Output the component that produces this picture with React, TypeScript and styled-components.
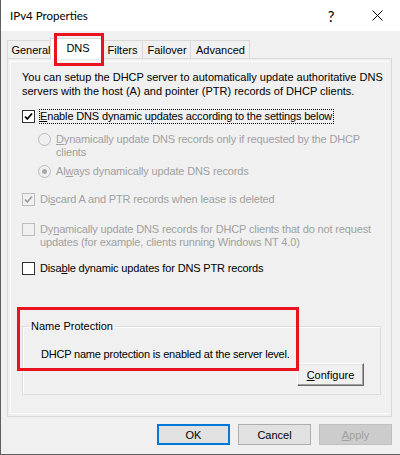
import React from "react";
import styled, { createGlobalStyle } from "styled-components";

const Global = createGlobalStyle`
  html, body { margin: 0; padding: 0; background: #f0f0f0; }
  * { box-sizing: border-box; }
`;

const Window = styled.div`
  position: relative;
  width: 400px;
  height: 455px;
  background: #f0f0f0;
  border-left: 1px solid #5f5f5f;
  border-bottom: 1px solid #5f5f5f;
  font-family: "Liberation Sans", Arial, sans-serif;
  font-size: 11px;
  color: #000;
  display: flex;
  flex-direction: column;
`;

const TitleBar = styled.div`
  height: 31px;
  background: #fff;
  display: flex;
  align-items: center;
  padding-left: 9px;
`;

const Title = styled.div`
  flex: 1;
  font-family: Lato, "Noto Sans", sans-serif;
  font-size: 11.5px;
  padding-bottom: 1px;
`;

const CaptionButton = styled.div<{ $w: number }>`
  width: ${(p) => p.$w}px;
  height: 31px;
  display: flex;
  align-items: center;
  justify-content: center;
  font-family: Lato, "Noto Sans", sans-serif;
  font-size: 15px;
`;

const Body = styled.div`
  flex: 1;
  padding: 9px 8px 0 6px;
  display: flex;
  flex-direction: column;
`;

const Tabs = styled.div`
  display: flex;
  align-items: flex-end;
  height: 18px;
  position: relative;
  z-index: 1;
`;

const Tab = styled.div<{ $w: number; $active?: boolean }>`
  width: ${(p) => p.$w}px;
  height: ${(p) => (p.$active ? 21 : 18)}px;
  margin-left: ${(p) => (p.$active ? -3 : -1)}px;
  margin-right: ${(p) => (p.$active ? -2 : 0)}px;
  margin-bottom: ${(p) => (p.$active ? -1 : 0)}px;
  border: 1px solid #d9d9d9;
  border-bottom: none;
  background: ${(p) => (p.$active ? "#fff" : "#f0f0f0")};
  display: flex;
  align-items: ${(p) => (p.$active ? "flex-start" : "center")};
  padding-top: ${(p) => (p.$active ? 3 : 0)}px;
  padding-left: ${(p) => (p.$active ? 2 : 1)}px;
  justify-content: center;
  position: relative;
  z-index: ${(p) => (p.$active ? 2 : 1)};
  white-space: nowrap;
  &:first-child { margin-left: 0; padding-left: 2px; }
`;

const Panel = styled.div`
  width: 385px;
  height: 359px;
  border: 1px solid #d9d9d9;
  padding: 2px;
`;

const Page = styled.div`
  height: 100%;
  border: 1px solid #fff;
  border-right-color: transparent;
  padding: 8px 0 0 11px;
  display: flex;
  flex-direction: column;
`;

const Para = styled.div`
  line-height: 14px;
  white-space: nowrap;
`;

const Row = styled.div<{ $top: number; $indent?: number; $disabled?: boolean }>`
  display: flex;
  align-items: flex-start;
  margin-top: ${(p) => p.$top}px;
  margin-left: ${(p) => p.$indent ?? 0}px;
  color: ${(p) => (p.$disabled ? "#a0a0a0" : "#000")};
  line-height: 13px;
  white-space: nowrap;
  letter-spacing: -0.15px;
`;

const Label = styled.span<{ $focus?: boolean }>`
  margin-left: 5px;
  padding: 0 1px 0 0;
  outline: ${(p) => (p.$focus ? "1px dotted #000" : "none")};
  outline-offset: 0;
`;

const Box = styled.span<{ $disabled?: boolean }>`
  width: 13px;
  height: 13px;
  flex: none;
  border: 1px solid ${(p) => (p.$disabled ? "#bcbcbc" : "#333")};
  background: ${(p) => (p.$disabled ? "#f0f0f0" : "#fff")};
  display: flex;
  align-items: center;
  justify-content: center;
`;

const Radio = styled.span<{ $disabled?: boolean }>`
  width: 13px;
  height: 13px;
  flex: none;
  border-radius: 50%;
  border: 1px solid ${(p) => (p.$disabled ? "#bcbcbc" : "#333")};
  background: ${(p) => (p.$disabled ? "#f0f0f0" : "#fff")};
  display: flex;
  align-items: center;
  justify-content: center;
`;

const Dot = styled.span`
  width: 5px;
  height: 5px;
  border-radius: 50%;
  background: #a8a8a8;
`;

const Group = styled.fieldset`
  margin: 45px 0 0 0;
  width: 359px;
  border: 1px solid #dcdcdc;
  box-shadow: 1px 1px 0 #fff inset;
  padding: 0 0 8px 0;
  display: flex;
  flex-direction: column;
`;

const Legend = styled.legend`
  margin-left: 6px;
  padding: 0 2px;
  line-height: 13px;
`;

const GroupText = styled.div`
  margin: 15px 0 0 18px;
  line-height: 13px;
  white-space: nowrap;
  letter-spacing: -0.2px;
`;

const ClassicButton = styled.div`
  align-self: flex-end;
  margin: 2px 16px 0 0;
  width: 67px;
  height: 23px;
  background: #f0f0f0;
  border-top: 1px solid #fff;
  border-left: 1px solid #fff;
  border-right: 1px solid #696969;
  border-bottom: 1px solid #696969;
  box-shadow: inset -1px -1px 0 #a0a0a0, inset 1px 1px 0 #e3e3e3;
  display: flex;
  align-items: center;
  justify-content: center;
`;

const Footer = styled.div`
  display: flex;
  justify-content: flex-end;
  gap: 8px;
  margin-top: 7px;
  width: 385px;
`;

const Button = styled.div<{ $kind?: "default" | "disabled" }>`
  width: 73px;
  height: 21px;
  display: flex;
  align-items: center;
  justify-content: center;
  background: ${(p) => (p.$kind === "disabled" ? "#cccccc" : "#e1e1e1")};
  border: 1px solid
    ${(p) =>
      p.$kind === "default" ? "#0078d7" : p.$kind === "disabled" ? "#bfbfbf" : "#adadad"};
  box-shadow: ${(p) => (p.$kind === "default" ? "inset 0 0 0 1px #0078d7" : "none")};
  color: ${(p) => (p.$kind === "disabled" ? "#a0a0a0" : "#000")};
  font-size: 11px;
`;

const Mark = styled.div<{ $x: number; $y: number; $w: number; $h: number }>`
  position: absolute;
  left: ${(p) => p.$x}px;
  top: ${(p) => p.$y}px;
  width: ${(p) => p.$w}px;
  height: ${(p) => p.$h}px;
  border: 3px solid #e8131f;
  pointer-events: none;
  z-index: 5;
`;

const Check = ({ color }: { color: string }) => (
  <svg width="9" height="9" viewBox="0 0 9 9">
    <polyline points="1,4.5 3.3,7 8,1.5" fill="none" stroke={color} strokeWidth="1.8" />
  </svg>
);

export default function App() {
  return (
    <>
      <Global />
      <Window>
        <TitleBar>
          <Title>IPv4 Properties</Title>
          <CaptionButton $w={46}>?</CaptionButton>
          <CaptionButton $w={46}>
            <svg width="11" height="11" viewBox="0 0 11 11">
              <path d="M0.5 0.5 L10.5 10.5 M10.5 0.5 L0.5 10.5" stroke="#000" strokeWidth="1" />
            </svg>
          </CaptionButton>
        </TitleBar>
        <Body>
          <Tabs>
            <Tab $w={46}>General</Tab>
            <Tab $w={54} $active>DNS</Tab>
            <Tab $w={42}>Filters</Tab>
            <Tab $w={49}>Failover</Tab>
            <Tab $w={60}>Advanced</Tab>
          </Tabs>
          <Panel>
            <Page>
              <Para>
                You can setup the DHCP server to automatically update authoritative DNS
                <br />
                servers with the host (A) and pointer (PTR) records of DHCP clients.
              </Para>
              <Row $top={12}>
                <Box>
                  <Check color="#000" />
                </Box>
                <Label $focus>
                  <u>E</u>nable DNS dynamic updates according to the settings below
                </Label>
              </Row>
              <Row $top={10} $indent={16} $disabled>
                <Radio $disabled />
                <Label>
                  <u>D</u>ynamically update DNS records only if requested by the DHCP
                  <br />
                  clients
                </Label>
              </Row>
              <Row $top={6} $indent={16} $disabled>
                <Radio $disabled>
                  <Dot />
                </Radio>
                <Label>
                  Al<u>w</u>ays dynamically update DNS records
                </Label>
              </Row>
              <Row $top={15} $disabled>
                <Box $disabled>
                  <Check color="#a0a0a0" />
                </Box>
                <Label>
                  Di<u>s</u>card A and PTR records when lease is deleted
                </Label>
              </Row>
              <Row $top={17} $disabled>
                <Box $disabled />
                <Label>
                  Dy<u>n</u>amically update DNS records for DHCP clients that do not request
                  <br />
                  updates (for example, clients running Windows NT 4.0)
                </Label>
              </Row>
              <Row $top={13}>
                <Box />
                <Label>
                  Disa<u>b</u>le dynamic updates for DNS PTR records
                </Label>
              </Row>
              <Group>
                <Legend>Name Protection</Legend>
                <GroupText>DHCP name protection is enabled at the server level.</GroupText>
                <ClassicButton>
                  <span>
                    <u>C</u>onfigure
                  </span>
                </ClassicButton>
              </Group>
            </Page>
          </Panel>
          <Footer>
            <Button $kind="default">OK</Button>
            <Button>Cancel</Button>
            <Button $kind="disabled">
              <span>
                <u>A</u>pply
              </span>
            </Button>
          </Footer>
        </Body>
        <Mark $x={53} $y={33} $w={50} $h={33} />
        <Mark $x={16} $y={307} $w={282} $h={64} />
      </Window>
    </>
  );
}
